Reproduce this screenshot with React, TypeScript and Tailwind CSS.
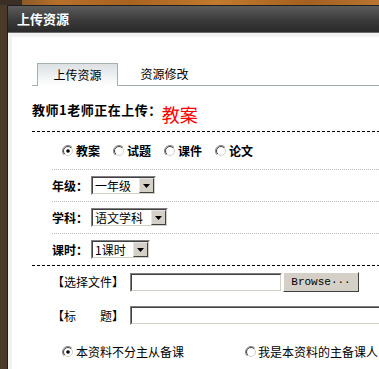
import React from 'react';

const CJK = "font-['SimSun','Noto_Sans_CJK_SC',sans-serif]";

function Radio({ checked = false }: { checked?: boolean }) {
  return (
    <svg width="12" height="12" viewBox="0 0 12 12" className="shrink-0">
      <defs>
        <linearGradient id="radio-outer" x1="0" y1="0" x2="1" y2="1">
          <stop offset="0.5" stopColor="#808080" />
          <stop offset="0.5" stopColor="#ffffff" />
        </linearGradient>
        <linearGradient id="radio-inner" x1="0" y1="0" x2="1" y2="1">
          <stop offset="0.5" stopColor="#404040" />
          <stop offset="0.5" stopColor="#d4d0c8" />
        </linearGradient>
      </defs>
      <circle cx="6" cy="6" r="5.5" fill="#fff" stroke="url(#radio-outer)" />
      <circle cx="6" cy="6" r="4.5" fill="#fff" stroke="url(#radio-inner)" />
      {checked && <circle cx="6" cy="6" r="1.8" fill="#000" />}
    </svg>
  );
}

function FakeSelect({ value, width }: { value: string; width: string }) {
  return (
    <div className={`${width} h-[19px] flex border border-t-[#808080] border-l-[#808080] border-b-white border-r-white`}>
      <div className="flex-1 flex border border-t-[#404040] border-l-[#404040] border-b-[#d4d0c8] border-r-[#d4d0c8] bg-white">
        <span className="flex-1 pl-[2px] text-[12px] leading-[15px]">{value}</span>
        <div className="w-[15px] bg-[#d4d0c8] border border-t-[#e8e6e0] border-l-[#e8e6e0] border-b-[#404040] border-r-[#404040] flex items-center justify-center">
          <svg width="7" height="4" viewBox="0 0 7 4">
            <path d="M0 0h7L3.5 4z" fill="#000" />
          </svg>
        </div>
      </div>
    </div>
  );
}

function Dashed() {
  return <div className="h-px bg-[repeating-linear-gradient(to_right,#000_0_3px,transparent_3px_5px)]" />;
}

function Dotted() {
  return <div className="h-px ml-[20px] bg-[repeating-linear-gradient(to_right,#bdbdbd_0_1px,transparent_1px_2px)]" />;
}

function FieldRow({ label, value, width }: { label: string; value: string; width: string }) {
  return (
    <div className="h-[31px] pl-[20px] flex items-center">
      <span className="w-[36px] font-bold text-[12px]">{label}</span>
      <div className="ml-[3px]">
        <FakeSelect value={value} width={width} />
      </div>
    </div>
  );
}

export default function App() {
  const types = ['教案', '试题', '课件', '论文'];

  return (
    <div className={`w-[379px] h-[369px] overflow-hidden bg-[#4b3a2a] ${CJK} text-black`}>
      <div className="flex h-[5px]">
        <div className="w-[22px] bg-[#3b2f25]" />
        <div className="flex-1 bg-[linear-gradient(90deg,#8a5a2a,#b8702a_10%,#a86320_30%,#c27a2e_55%,#a4601f_80%,#b87430)]" />
      </div>

      <div className="ml-[7px] w-[420px] border border-[#1e1e1e] bg-[#f2f2f2]">
        {/* Title bar */}
        <div className="h-[27px] flex items-center pl-[9px] bg-[linear-gradient(#5c5c5c,#3a3a3a_55%,#2a2a2a)] border-b border-[#6a6a6a]">
          <span className="text-white font-bold text-[13px]">上传资源</span>
        </div>

        <div className="pl-[4px] pt-[4px]">
          <div className="bg-white pt-[26px] pl-[20px] h-[340px]">
            {/* Tabs */}
            <div className="flex items-end border-b border-[#a3b0ad] h-[23px]">
              <div className="ml-[5px] w-[81px] h-[23px] -mb-px border border-b-0 border-[#a3b0ad] bg-[linear-gradient(#dce1e4,#ffffff)] flex items-center justify-center text-[12px]">
                上传资源
              </div>
              <div className="ml-[6px] w-[81px] h-[22px] flex items-center justify-center text-[12px]">
                资源修改
              </div>
            </div>

            {/* Heading */}
            <div className="mt-[17px] flex items-start">
              <span className="font-bold text-[13px] leading-[14px] tracking-[0.5px]">教师1老师正在上传：</span>
              <span className="mt-[2px] text-[#ff0000] text-[18px] leading-[18px]">教案</span>
            </div>

            <div className="mt-[8px]">
              <Dashed />
            </div>

            {/* Type radios */}
            <div className="h-[37px] pl-[30px] flex items-center">
              {types.map((t, i) => (
                <div key={t} className="w-[51px] flex items-center gap-[2px]">
                  <Radio checked={i === 0} />
                  <span className="font-bold text-[12px]">{t}</span>
                </div>
              ))}
            </div>

            <Dotted />
            <FieldRow label="年级：" value="一年级" width="w-[65px]" />
            <Dotted />
            <FieldRow label="学科：" value="语文学科" width="w-[77px]" />
            <Dotted />
            <FieldRow label="课时：" value="1课时" width="w-[59px]" />
            <Dashed />

            {/* File */}
            <div className="h-[32px] pl-[20px] flex items-center">
              <span className="w-[78px] text-[12px]">【选择文件】</span>
              <div className="w-[152px] h-[19px] border border-t-[#808080] border-l-[#808080] border-b-white border-r-white">
                <div className="h-full border border-t-[#404040] border-l-[#404040] border-b-[#d4d0c8] border-r-[#d4d0c8] bg-white" />
              </div>
              <div className="ml-[1px] w-[76px] h-[20px] bg-[#d4d0c8] border border-t-white border-l-white border-b-[#404040] border-r-[#404040] flex items-center justify-center font-['Liberation_Mono',monospace] text-[11px]">
                Browse···
              </div>
            </div>

            {/* Title */}
            <div className="h-[35px] pl-[20px] flex items-center">
              <span className="w-[78px] text-[12px]">【标　　题】</span>
              <div className="flex-1 h-[19px] border border-t-[#808080] border-l-[#808080] border-b-white border-r-white">
                <div className="h-full border border-t-[#404040] border-l-[#404040] border-b-[#d4d0c8] border-r-[#d4d0c8] bg-white" />
              </div>
            </div>

            {/* Prep role */}
            <div className="h-[38px] pl-[30px] flex items-center">
              <div className="w-[183px] flex items-center gap-[2px]">
                <Radio checked />
                <span className="text-[12px]">本资料不分主从备课</span>
              </div>
              <div className="flex items-center gap-[1px]">
                <Radio />
                <span className="text-[12px]">我是本资料的主备课人</span>
              </div>
            </div>
          </div>
        </div>
      </div>
    </div>
  );
}
